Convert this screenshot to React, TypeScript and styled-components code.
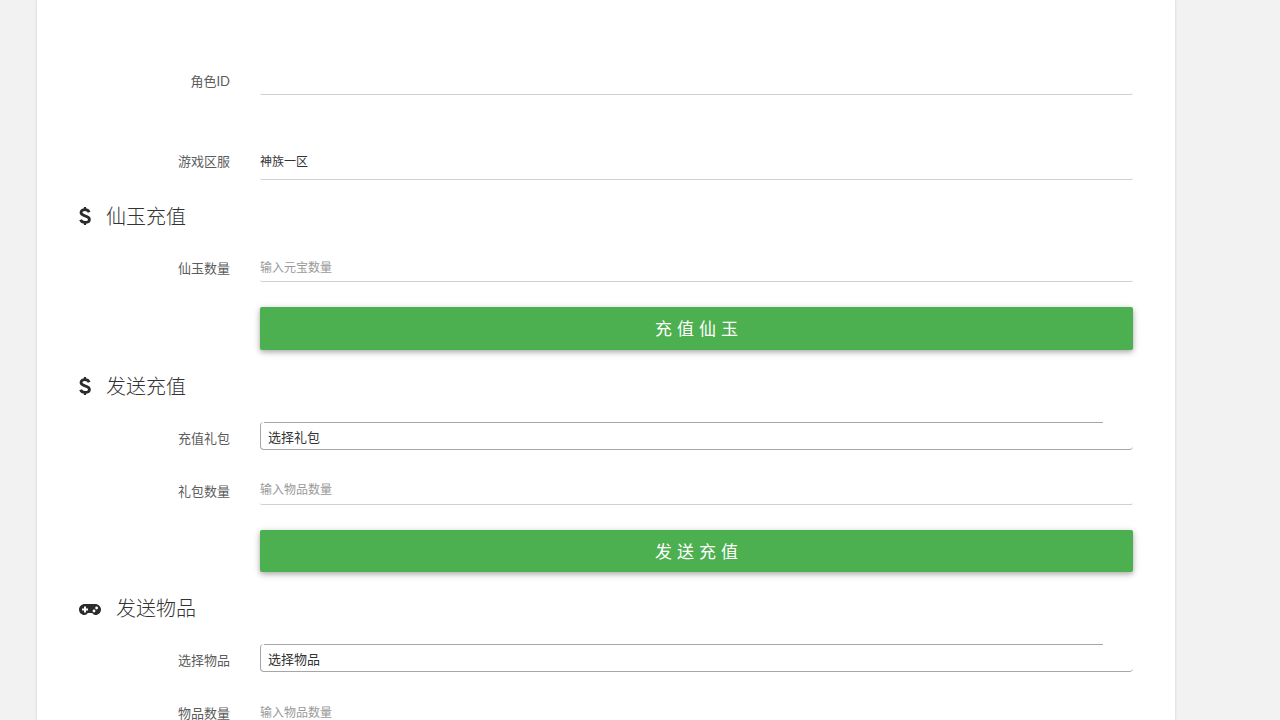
import React from 'react';
import styled, { createGlobalStyle } from 'styled-components';

const GlobalStyle = createGlobalStyle`
  html, body {
    margin: 0;
    height: 720px;
    overflow: hidden;
    background: #f2f2f2;
    font-family: Lato, 'Noto Sans CJK SC', sans-serif;
  }
  * { box-sizing: border-box; }
`;

const Page = styled.div`
  width: 1138px;
  height: 720px;
  margin-left: 37px;
  padding: 0 42px 0 41px;
  background: #fff;
  box-shadow: 0 0 3px rgba(0, 0, 0, 0.14);
  overflow: hidden;
`;

const Form = styled.form`
  display: flex;
  flex-direction: column;
`;

const Row = styled.div<{ $top: number; $height: number }>`
  display: grid;
  grid-template-columns: 152px 873px;
  column-gap: 30px;
  height: ${p => p.$height}px;
  margin-top: ${p => p.$top}px;
`;

const Label = styled.label<{ $offset: number }>`
  justify-self: end;
  padding-top: ${p => p.$offset}px;
  font-size: 13px;
  line-height: 20px;
  color: #5c5c5c;
`;

const Field = styled.div`
  height: 100%;
  border-bottom: 1px solid #d0d0d0;
  border-radius: 0 0 2px 2px;
`;

const TextInput = styled.input<{ $textTop: number }>`
  display: block;
  width: 100%;
  height: 20px;
  margin-top: ${p => p.$textTop}px;
  padding: 0;
  border: 0;
  outline: 0;
  background: transparent;
  font-family: inherit;
  font-size: 12px;
  line-height: 20px;
  color: #333;
  &::placeholder {
    color: #999;
    opacity: 1;
  }
`;

const Heading = styled.h3<{ $top: number }>`
  display: flex;
  align-items: center;
  gap: 15px;
  height: 28px;
  margin: ${p => p.$top}px 0 0;
  padding-left: 1px;
  font-size: 20px;
  font-weight: 300;
  line-height: 28px;
  color: #333;
`;

const IconSvg = styled.svg`
  flex: none;
  color: #2b2b2b;
`;

const DollarIcon = () => (
  <IconSvg width="12" height="20" viewBox="0 0 12 20" fill="none" stroke="currentColor" strokeWidth="2.8">
    <path d="M10.2 6.2C9.5 4.5 8 3.6 6 3.6 3.6 3.6 2 4.8 2 6.6 2 8.6 3.8 9.2 6 9.9 8.4 10.6 10.4 11.3 10.4 13.4 10.4 15.3 8.6 16.4 6 16.4 3.8 16.4 2.2 15.5 1.6 13.8" />
    <path d="M6 1V3.6M6 16.4V19" strokeWidth="2.2" />
  </IconSvg>
);

const GamepadIcon = () => (
  <IconSvg width="22" height="20" viewBox="0 0 22 20" fill="currentColor">
    <path
      fillRule="evenodd"
      d="M6 6H16C19.5 6 22 8.5 22 11.5 22 14.5 19.5 17 16.5 17 15 17 14 16.2 13.2 15H8.8C8 16.2 7 17 5.5 17 2.5 17 0 14.5 0 11.5 0 8.5 2.5 6 6 6ZM5 8.5V10.5H3V12.5H5V14.5H7V12.5H9V10.5H7V8.5ZM15 11.6A1.4 1.4 0 1 0 15 14.4 1.4 1.4 0 1 0 15 11.6ZM17.6 8.6A1.4 1.4 0 1 0 17.6 11.4 1.4 1.4 0 1 0 17.6 8.6Z"
    />
  </IconSvg>
);

const SelectBox = styled.div`
  position: relative;
  height: 28px;
  padding: 3px 0 0 7px;
  border-left: 1px solid #a6a6a6;
  border-bottom: 1px solid #a6a6a6;
  border-radius: 4px;
  font-size: 13px;
  line-height: 24px;
  color: #333;
  &::before {
    content: '';
    position: absolute;
    top: 0;
    left: 3px;
    right: 30px;
    height: 1px;
    background: #a6a6a6;
  }
`;

const ActionRow = styled.div<{ $top: number }>`
  display: grid;
  grid-template-columns: 873px;
  padding-left: 182px;
  margin-top: ${p => p.$top}px;
`;

const SubmitButton = styled.button<{ $height: number }>`
  height: ${p => p.$height}px;
  padding: 0 0 2px;
  border: 0;
  border-radius: 2px;
  background: #4caf50;
  box-shadow: 0 2px 5px rgba(0, 0, 0, 0.26), 0 2px 10px rgba(0, 0, 0, 0.12);
  font-family: inherit;
  font-size: 17px;
  letter-spacing: 5px;
  text-indent: 5px;
  color: #fff;
`;

const App: React.FC = () => (
  <Page>
    <GlobalStyle />
    <Form>
      <Row $top={60} $height={35}>
        <Label $offset={11}>角色ID</Label>
        <Field />
      </Row>
      <Row $top={50} $height={35}>
        <Label $offset={6}>游戏区服</Label>
        <Field>
          <TextInput $textTop={7} readOnly value="神族一区" />
        </Field>
      </Row>

      <Heading $top={22}>
        <DollarIcon />
        仙玉充值
      </Heading>
      <Row $top={17} $height={35}>
        <Label $offset={11}>仙玉数量</Label>
        <Field>
          <TextInput $textTop={11} placeholder="输入元宝数量" />
        </Field>
      </Row>
      <ActionRow $top={25}>
        <SubmitButton type="button" $height={43}>充值仙玉</SubmitButton>
      </ActionRow>

      <Heading $top={22}>
        <DollarIcon />
        发送充值
      </Heading>
      <Row $top={22} $height={28}>
        <Label $offset={6}>充值礼包</Label>
        <SelectBox>选择礼包</SelectBox>
      </Row>
      <Row $top={25} $height={30}>
        <Label $offset={6}>礼包数量</Label>
        <Field>
          <TextInput $textTop={5} placeholder="输入物品数量" />
        </Field>
      </Row>
      <ActionRow $top={25}>
        <SubmitButton type="button" $height={42}>发送充值</SubmitButton>
      </ActionRow>

      <Heading $top={22}>
        <GamepadIcon />
        发送物品
      </Heading>
      <Row $top={22} $height={28}>
        <Label $offset={6}>选择物品</Label>
        <SelectBox>选择物品</SelectBox>
      </Row>
      <Row $top={25} $height={30}>
        <Label $offset={6}>物品数量</Label>
        <Field>
          <TextInput $textTop={6} placeholder="输入物品数量" />
        </Field>
      </Row>
    </Form>
  </Page>
);

export default App;
